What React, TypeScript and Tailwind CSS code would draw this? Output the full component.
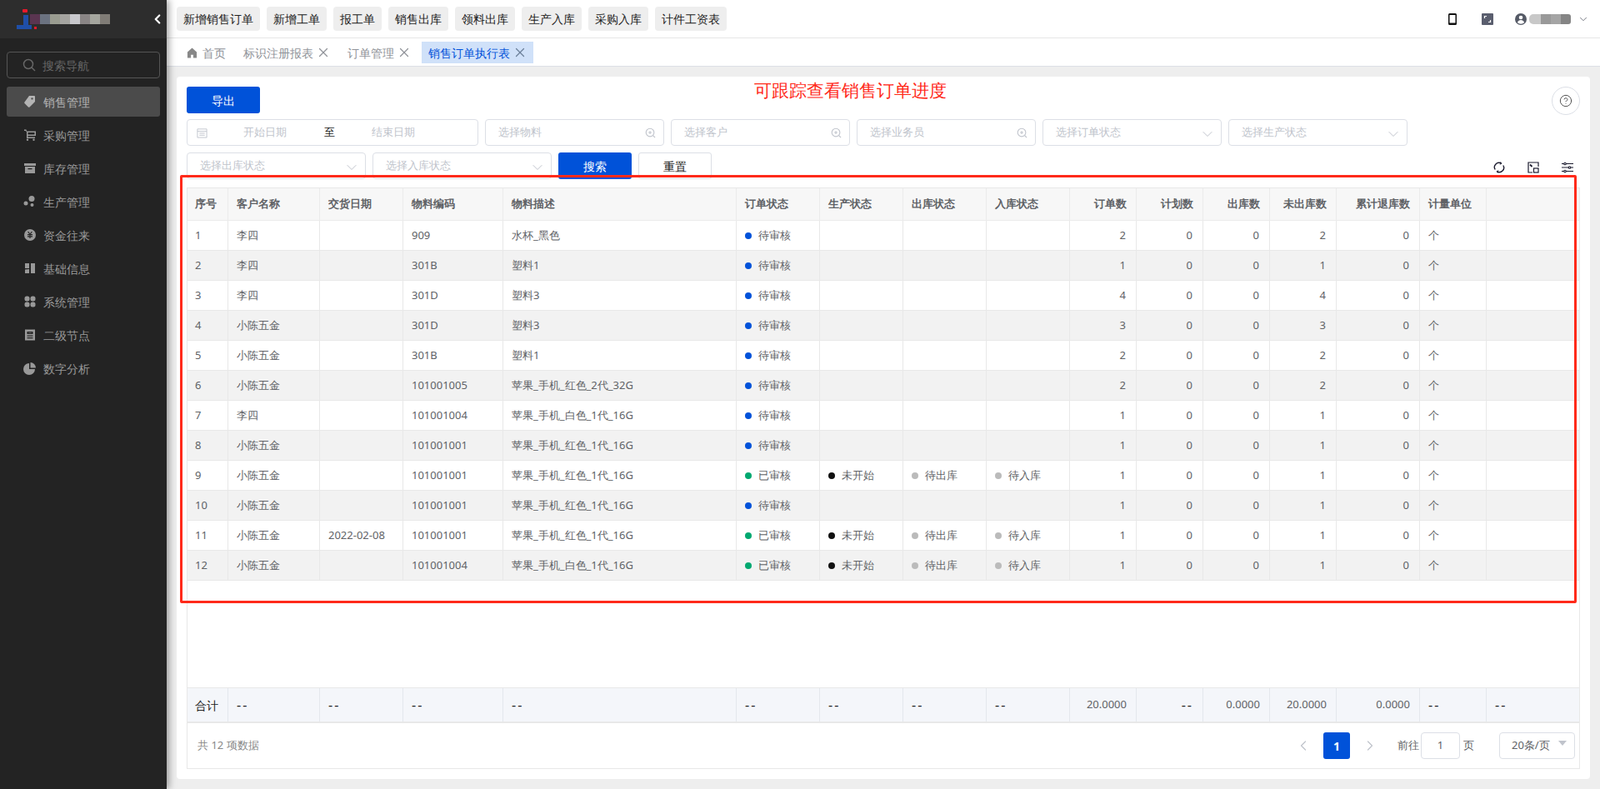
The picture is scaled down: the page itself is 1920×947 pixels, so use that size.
import { ChevronDown, ChevronLeft, ChevronRight, CircleHelp, X } from 'lucide-react';

type Row = {
  customer: string;
  date?: string;
  code: string;
  desc: string;
  approved?: boolean;
  qty: number;
};

const rows: Row[] = [
  { customer: '李四', code: '909', desc: '水杯_黑色', qty: 2 },
  { customer: '李四', code: '301B', desc: '塑料1', qty: 1 },
  { customer: '李四', code: '301D', desc: '塑料3', qty: 4 },
  { customer: '小陈五金', code: '301D', desc: '塑料3', qty: 3 },
  { customer: '小陈五金', code: '301B', desc: '塑料1', qty: 2 },
  { customer: '小陈五金', code: '101001005', desc: '苹果_手机_红色_2代_32G', qty: 2 },
  { customer: '李四', code: '101001004', desc: '苹果_手机_白色_1代_16G', qty: 1 },
  { customer: '小陈五金', code: '101001001', desc: '苹果_手机_红色_1代_16G', qty: 1 },
  { customer: '小陈五金', code: '101001001', desc: '苹果_手机_红色_1代_16G', approved: true, qty: 1 },
  { customer: '小陈五金', code: '101001001', desc: '苹果_手机_红色_1代_16G', qty: 1 },
  { customer: '小陈五金', date: '2022-02-08', code: '101001001', desc: '苹果_手机_红色_1代_16G', approved: true, qty: 1 },
  { customer: '小陈五金', code: '101001004', desc: '苹果_手机_白色_1代_16G', approved: true, qty: 1 },
];

const quickButtons = ['新增销售订单', '新增工单', '报工单', '销售出库', '领料出库', '生产入库', '采购入库', '计件工资表'];

const menuIcons = {
  tag: <path d="M7 1h6a1 1 0 0 1 1 1v6l-6.5 6.5a1.2 1.2 0 0 1-1.6 0L1.500 10a1.200 1.200 0 0 1 0-1.600zM10.500 3.200a1.200 1.200 0 1 0 .01 0z" fillRule="evenodd" />,
  cart: (
    <>
      <path d="M1 1.500h2.500l.6 2H15v5.500H5.500v1.500H14V12H4V4.500L2.800 3H1zM5.500 5v2.500h8V5z" fillRule="evenodd" />
      <circle cx="5" cy="13.800" r="1.200" />
      <circle cx="12.500" cy="13.800" r="1.200" />
    </>
  ),
  box: <path d="M1 2h14v3H1zM2 6h12v8H2zM5.500 8v1.300h5V8z" fillRule="evenodd" />,
  dots: (
    <>
      <circle cx="10" cy="4.500" r="3.500" />
      <circle cx="3" cy="10" r="2.500" />
      <circle cx="10.500" cy="12" r="2" />
    </>
  ),
  yen: <path d="M8 1a7 7 0 1 1 0 14A7 7 0 0 1 8 1zM5 4l2.200 3H5v1.200h2.400v1H5v1.200h2.400V12h1.200v-1.600H11V9.200H8.600v-1H11V7H8.800L11 4H9.600L8 6.400 6.400 4z" fillRule="evenodd" />,
  blocks: <path d="M2 2h5v6H2zM9 2h5v12H9zM2 9.500 7 9v5H2z" />,
  grid: (
    <>
      <rect x="1.500" y="1.500" width="6" height="6" rx="2.500" />
      <rect x="8.500" y="1.500" width="6" height="6" rx="2.500" />
      <rect x="1.500" y="8.500" width="6" height="6" rx="2.500" />
      <rect x="8.500" y="8.500" width="6" height="6" rx="2.500" />
    </>
  ),
  doc: <path d="M2 1.500h12v13H2zM4.500 4v3h7V4zM4.500 8.500v1.300h7V8.500zM4.500 11v1.300h7V11zM6 5.300h4v.5H6z" fillRule="evenodd" />,
  pie: (
    <>
      <path d="M7 2v7h7a7 7 0 1 1-7-7z" />
      <path d="M8.500 1a6.500 6.500 0 0 1 6.500 6.500H8.500z" />
    </>
  ),
};

const menu: { label: string; icon: keyof typeof menuIcons; active?: boolean }[] = [
  { label: '销售管理', icon: 'tag', active: true },
  { label: '采购管理', icon: 'cart' },
  { label: '库存管理', icon: 'box' },
  { label: '生产管理', icon: 'dots' },
  { label: '资金往来', icon: 'yen' },
  { label: '基础信息', icon: 'blocks' },
  { label: '系统管理', icon: 'grid' },
  { label: '二级节点', icon: 'doc' },
  { label: '数字分析', icon: 'pie' },
];

function Cols() {
  return (
    <colgroup>
      <col className="w-[49px]" />
      <col className="w-[110px]" />
      <col className="w-[100px]" />
      <col className="w-[120px]" />
      <col className="w-[280px]" />
      <col className="w-[100px]" />
      <col className="w-[100px]" />
      <col className="w-[100px]" />
      <col className="w-[100px]" />
      <col className="w-[80px]" />
      <col className="w-[80px]" />
      <col className="w-[80px]" />
      <col className="w-[80px]" />
      <col className="w-[100px]" />
      <col className="w-[80px]" />
      <col />
    </colgroup>
  );
}

function SearchPlus() {
  return (
    <svg viewBox="0 0 14 14" className="w-[13px] h-[13px] text-[#c0c4cc]" fill="none" stroke="currentColor" strokeWidth="1.200">
      <circle cx="6.500" cy="6.500" r="5.200" />
      <path d="M6.500 4.500v4M4.500 6.500h4M10.500 10.500l2.500 2.500" />
    </svg>
  );
}

function Field({ label, kind, width = 'w-[215px]' }: { label: string; kind: 'search' | 'select'; width?: string }) {
  return (
    <div className={`${width} h-[32px] border border-[#dcdfe6] rounded-[4px] flex items-center justify-between pl-[15px] pr-[9px] text-[13px] text-[#c0c4cc]`}>
      <span>{label}</span>
      {kind === 'search' ? <SearchPlus /> : <ChevronDown className="w-[20px] h-[20px] mt-[4px] -mr-[3px] text-[#c0c4cc]" strokeWidth={1.200} />}
    </div>
  );
}

function Status({ color, label }: { color: string; label: string }) {
  return (
    <div className="flex items-center gap-[8px]">
      <span className={`w-[8px] h-[8px] rounded-full ${color}`} />
      <span>{label}</span>
    </div>
  );
}

const th = 'h-[39px] px-[10px] border-r border-b border-[#ebebeb] font-semibold text-left whitespace-nowrap';
const thNum = 'h-[39px] pl-[4px] pr-[11px] border-r border-b border-[#ebebeb] font-semibold text-right whitespace-nowrap';
const td = 'h-[36px] px-[10px] border-r border-b border-[#e8e8e8] whitespace-nowrap';
const tdNum = 'h-[36px] px-[12px] border-r border-b border-[#e8e8e8] text-right';
const ft = 'h-[40px] px-[10px] border-r border-[#e4e7ed] text-[16px] text-[#222222] tracking-[2px]';
const ftNum = 'h-[40px] px-[11px] border-r border-[#e4e7ed] text-right text-[13px] text-[#606266]';
const ftDash = 'h-[40px] px-[11px] border-r border-[#e4e7ed] text-right text-[16px] text-[#222222] tracking-[2px]';

export default function App() {
  return (
    <div className="relative flex h-[947px] w-full overflow-hidden bg-[#eeeeee] font-['Liberation_Sans','Noto_Sans_CJK_SC',sans-serif]">
      {/* Sidebar */}
      <aside className="relative z-10 w-[200px] shrink-0 bg-[#232323] shadow-[3px_0_8px_rgba(0,0,0,0.35)]">
        <div className="h-[46px] bg-[#2d2d2d] flex items-center pl-[20px] pr-[2px]">
          <svg viewBox="0 0 26 26" className="w-[26px] h-[26px] shrink-0">
            <rect x="7" y="1" width="6" height="4" rx="1" fill="#e8192c" />
            <path d="M8 8h6v12h4v5H0v-5h8z" fill="#1f4fa8" />
            <rect x="21" y="22" width="3" height="3" fill="#e8192c" />
          </svg>
          <div className="flex -ml-[10px]">
            <span className="w-[12px] h-[12px] bg-[#5a3550]" />
            <span className="w-[12px] h-[12px] bg-[#6b7280]" />
            <span className="w-[12px] h-[12px] bg-[#9a9c90]" />
            <span className="w-[12px] h-[12px] bg-[#a5a4a0]" />
            <span className="w-[12px] h-[12px] bg-[#c8c8cc]" />
            <span className="w-[12px] h-[12px] bg-[#8a8585]" />
            <span className="w-[12px] h-[12px] bg-[#a5a69e]" />
            <span className="w-[12px] h-[12px] bg-[#807c76]" />
          </div>
          <ChevronLeft className="ml-auto w-[18px] h-[18px] text-white" strokeWidth={3} />
        </div>
        <div className="px-[8px] pt-[16px]">
          <div className="h-[32px] border border-[#555555] rounded-[4px] flex items-center pl-[18px] gap-[8px] text-[14px] text-[#666666]">
            <svg viewBox="0 0 16 16" className="w-[16px] h-[16px]" fill="none" stroke="currentColor" strokeWidth="1.500">
              <circle cx="7" cy="7" r="5.500" />
              <path d="m11 11 4 4" />
            </svg>
            <span>搜索导航</span>
          </div>
          <nav className="mt-[10px] flex flex-col gap-[4px]">
            {menu.map((item) => (
              <div
                key={item.label}
                className={`h-[36px] rounded-[3px] flex items-center pl-[20px] gap-[8px] text-[14px] ${item.active ? 'bg-[#4b4b4b] text-[#b4b4b4]' : 'text-[#999999]'}`}
              >
                <svg viewBox="0 0 16 16" className="w-[16px] h-[16px] fill-current">
                  {menuIcons[item.icon]}
                </svg>
                <span>{item.label}</span>
              </div>
            ))}
          </nav>
        </div>
      </aside>

      <div className="flex-1 min-w-0 flex flex-col">
        {/* Top bar */}
        <header className="h-[46px] bg-white border-b border-[#e6e6e6] flex items-start pt-[8px] pl-[12px] pr-[13px] gap-[8px]">
          {quickButtons.map((b) => (
            <div key={b} className="h-[29px] px-[8px] rounded-[4px] bg-[#eeeeee] flex items-center text-[14px] text-[#222222]">
              {b}
            </div>
          ))}
          <div className="ml-auto flex items-center h-[30px]">
            <svg viewBox="0 0 10 14" className="w-[10px] h-[14px] mr-[30px]">
              <path d="M1.500 0h7A1.500 1.500 0 0 1 10 1.500v11A1.500 1.500 0 0 1 8.500 14h-7A1.500 1.500 0 0 1 0 12.500v-11A1.500 1.500 0 0 1 1.500 0zM1.500 2v9.500h7V2z" fill="#111" fillRule="evenodd" />
            </svg>
            <svg viewBox="0 0 14 14" className="w-[14px] h-[14px] mr-[26px]">
              <rect width="14" height="14" rx="1" fill="#5a5e6e" />
              <path d="M3.500 6V3.500H6M8 10.500h2.500V8" stroke="#fff" strokeWidth="1.200" fill="none" />
            </svg>
            <svg viewBox="0 0 14 14" className="w-[14px] h-[14px]">
              <circle cx="7" cy="7" r="7" fill="#555a66" />
              <circle cx="7" cy="5" r="2.300" fill="#fff" />
              <path d="M2.800 11c.8-2 2.500-3 4.200-3s3.400 1 4.200 3A6 6 0 0 1 7 12.800 6 6 0 0 1 2.800 11z" fill="#fff" />
            </svg>
            <div className="flex ml-[3px] h-[12px] rounded-l-[5px] rounded-r-[3px] overflow-hidden">
              <span className="w-[14px] bg-[#c8c8c8]" />
              <span className="w-[12px] bg-[#999999]" />
              <span className="w-[12px] bg-[#a5a5a5]" />
              <span className="w-[12px] bg-[#858585]" />
            </div>
            <ChevronDown className="ml-[8px] w-[14px] h-[14px] text-[#666a75]" strokeWidth={1.500} />
          </div>
        </header>

        {/* Tabs */}
        <div className="h-[34px] bg-white border-b border-[#dcdfe6] flex items-start pt-[4px] pl-[16px] text-[14px] text-[#909399]">
          <div className="h-[26px] px-[8px] flex items-center gap-[6px] mr-[5px]">
            <svg viewBox="0 0 14 14" className="w-[13px] h-[13px] fill-[#888888]">
              <path d="M7 .5 13 6v7.500H8.500V9.500h-3v4H1V6z" />
            </svg>
            <span>首页</span>
          </div>
          <div className="h-[26px] pl-[8px] pr-[4px] flex items-center gap-[3px] mr-[8px]">
            <span>标识注册报表</span>
            <X className="w-[18px] h-[18px]" strokeWidth={1.600} />
          </div>
          <div className="h-[26px] pl-[8px] pr-[4px] flex items-center gap-[3px] mr-[8px]">
            <span>订单管理</span>
            <X className="w-[18px] h-[18px]" strokeWidth={1.600} />
          </div>
          <div className="h-[26px] pl-[8px] pr-[7px] flex items-center gap-[3px] bg-[#d0e1f9]">
            <span className="text-[#0052d9]">销售订单执行表</span>
            <X className="w-[18px] h-[18px] text-[#6b7f99]" strokeWidth={1.600} />
          </div>
        </div>

        {/* Page card */}
        <main className="flex-1 min-h-0 p-[12px]">
          <div className="relative h-full bg-white rounded-[4px] p-[12px] flex flex-col">
            <div className="flex justify-between items-start h-[39px]">
              <div className="w-[88px] h-[32px] rounded-[3px] bg-[#0052d9] flex items-center justify-center text-[14px] text-white">导出</div>
              <div className="w-[34px] h-[34px] rounded-full border border-[#dcdfe6] flex items-center justify-center">
                <CircleHelp className="w-[16px] h-[16px] text-[#555555]" strokeWidth={1.500} />
              </div>
            </div>
            <div className="flex gap-[8px]">
              <div className="w-[350px] h-[32px] border border-[#dcdfe6] rounded-[4px] flex items-center pl-[11px] text-[13px] text-[#c0c4cc]">
                <svg viewBox="0 0 14 14" className="w-[13px] h-[13px]" fill="none" stroke="currentColor">
                  <path d="M1 2h12v11H1zM1 5h12M3.500 7.500h7M3.500 10h7" />
                </svg>
                <span className="ml-[43px]">开始日期</span>
                <span className="ml-[45px] text-[#222222]">至</span>
                <span className="ml-[44px]">结束日期</span>
              </div>
              <Field label="选择物料" kind="search" />
              <Field label="选择客户" kind="search" />
              <Field label="选择业务员" kind="search" />
              <Field label="选择订单状态" kind="select" />
              <Field label="选择生产状态" kind="select" />
            </div>
            <div className="flex items-start gap-[8px] mt-[8px] h-[42px]">
              <Field label="选择出库状态" kind="select" />
              <Field label="选择入库状态" kind="select" />
              <div className="w-[88px] h-[32px] rounded-[3px] bg-[#0052d9] flex items-center justify-center text-[14px] text-white">搜索</div>
              <div className="w-[88px] h-[32px] rounded-[3px] border border-[#dcdfe6] flex items-center justify-center text-[14px] text-[#222222]">重置</div>
              <div className="ml-auto flex items-center gap-[27px] pt-[11px] pr-[8px]">
                <svg viewBox="0 0 14 14" className="w-[14px] h-[14px]" fill="none" stroke="#1a1a2e" strokeWidth="1.400">
                  <path d="M2.200 9.500A5.300 5.300 0 0 1 9.500 2.200M11.800 4.500a5.300 5.300 0 0 1-7.300 7.300" />
                  <path d="m8.500 .5 1.300 1.800-2 1M5.500 13.500 4.200 11.700l2-1" strokeWidth="1" />
                </svg>
                <svg viewBox="0 0 14 14" className="w-[14px] h-[14px]" fill="none" stroke="#1a1a2e" strokeWidth="1.200">
                  <path d="M6 13H1V1h12v5" />
                  <rect x="7.500" y="8" width="5.500" height="5" />
                  <path d="M3 3.500 5.500 6" strokeWidth="1.800" />
                </svg>
                <svg viewBox="0 0 14 14" className="w-[14px] h-[14px]" fill="none" stroke="#1a1a2e" strokeWidth="1.100">
                  <path d="M0 2.500h14M0 7h14M0 11.500h14" />
                  <circle cx="4" cy="2.500" r="1.300" fill="#fff" />
                  <circle cx="9.500" cy="7" r="1.300" fill="#fff" />
                  <circle cx="4" cy="11.500" r="1.300" fill="#fff" />
                </svg>
              </div>
            </div>

            {/* Table */}
            <div className="flex-1 min-h-0 flex flex-col border border-[#e8e8e8] text-[13px] text-[#606266]">
              <div className="flex-1 min-h-0">
                <table className="w-full table-fixed border-separate border-spacing-0">
                  <Cols />
                  <thead className="bg-[#f7f7f7]">
                    <tr>
                      <th className="h-[39px] px-[9px] border-r border-b border-[#ebebeb] font-semibold text-left whitespace-nowrap">序号</th>
                      <th className={th}>客户名称</th>
                      <th className={th}>交货日期</th>
                      <th className={th}>物料编码</th>
                      <th className={th}>物料描述</th>
                      <th className={th}>订单状态</th>
                      <th className={th}>生产状态</th>
                      <th className={th}>出库状态</th>
                      <th className={th}>入库状态</th>
                      <th className={thNum}>订单数</th>
                      <th className={thNum}>计划数</th>
                      <th className={thNum}>出库数</th>
                      <th className={thNum}>未出库数</th>
                      <th className={thNum}>累计退库数</th>
                      <th className={th}>计量单位</th>
                      <th className="h-[39px] border-b border-[#ebebeb]" />
                    </tr>
                  </thead>
                  <tbody>
                    {rows.map((r, i) => (
                      <tr key={i} className={i % 2 === 1 ? 'bg-[#f2f2f2]' : 'bg-white'}>
                        <td className="h-[36px] px-[9px] border-r border-b border-[#e8e8e8] whitespace-nowrap">{i + 1}</td>
                        <td className={td}>{r.customer}</td>
                        <td className={td}>{r.date}</td>
                        <td className={td}>{r.code}</td>
                        <td className={td}>{r.desc}</td>
                        <td className={td}>
                          <Status color={r.approved ? 'bg-[#00a870]' : 'bg-[#0052d9]'} label={r.approved ? '已审核' : '待审核'} />
                        </td>
                        <td className={td}>{r.approved && <Status color="bg-[#111111]" label="未开始" />}</td>
                        <td className={td}>{r.approved && <Status color="bg-[#bbbbbb]" label="待出库" />}</td>
                        <td className={td}>{r.approved && <Status color="bg-[#bbbbbb]" label="待入库" />}</td>
                        <td className={tdNum}>{r.qty}</td>
                        <td className={tdNum}>0</td>
                        <td className={tdNum}>0</td>
                        <td className={tdNum}>{r.qty}</td>
                        <td className={tdNum}>0</td>
                        <td className={td}>个</td>
                        <td className="h-[36px] border-b border-[#e8e8e8]" />
                      </tr>
                    ))}
                  </tbody>
                </table>
              </div>
              <table className="w-full table-fixed border-separate border-spacing-0 bg-[#f4f6fa] border-t border-b-2 border-[#e8e8e8]">
                <Cols />
                <tbody>
                  <tr>
                    <td className="h-[40px] px-[9px] border-r border-[#e4e7ed] text-[14px] text-[#222222] whitespace-nowrap">合计</td>
                    <td className={ft}>--</td>
                    <td className={ft}>--</td>
                    <td className={ft}>--</td>
                    <td className={ft}>--</td>
                    <td className={ft}>--</td>
                    <td className={ft}>--</td>
                    <td className={ft}>--</td>
                    <td className={ft}>--</td>
                    <td className={ftNum}>20.0000</td>
                    <td className={ftDash}>--</td>
                    <td className={ftNum}>0.0000</td>
                    <td className={ftNum}>20.0000</td>
                    <td className={ftNum}>0.0000</td>
                    <td className={ft}>--</td>
                    <td className="h-[40px] px-[10px] text-[16px] text-[#222222] tracking-[2px]">--</td>
                  </tr>
                </tbody>
              </table>
              <div className="h-[54px] shrink-0 flex items-center pl-[12px] pr-[5px] text-[#888888]">
                <span>共 12 项数据</span>
                <div className="ml-auto flex items-center text-[#606266]">
                  <ChevronLeft className="w-[20px] h-[20px] text-[#c0c4cc]" strokeWidth={1.500} />
                  <div className="ml-[14px] w-[32px] h-[32px] rounded-[3px] bg-[#0052d9] flex items-center justify-center font-bold text-white text-[14px]">1</div>
                  <ChevronRight className="ml-[14px] w-[20px] h-[20px] text-[#c0c4cc]" strokeWidth={1.500} />
                  <span className="ml-[23px]">前往</span>
                  <div className="ml-[2px] w-[47px] h-[32px] rounded-[4px] border border-[#dcdfe6] flex items-center justify-center">1</div>
                  <span className="ml-[4px]">页</span>
                  <div className="relative ml-[30px] w-[91px] h-[32px] rounded-[4px] border border-[#dcdfe6] flex items-center pl-[14px]">
                    <span>20条/页</span>
                    <span className="absolute right-[9px] top-[9px] w-0 h-0 border-x-[5px] border-x-transparent border-t-[6px] border-t-[#c0c4cc]" />
                  </div>
                </div>
              </div>
            </div>

            {/* Red annotation drawn over the page */}
            <div className="absolute left-[693px] top-[4px] text-[21px] leading-[24px] text-[#ff2a1a]">可跟踪查看销售订单进度</div>
            <div className="absolute left-[4px] top-[118px] w-[1676px] h-[514px] border-[3px] border-[#ff2a1a] rounded-[2px] pointer-events-none" />
          </div>
        </main>
      </div>
    </div>
  );
}
